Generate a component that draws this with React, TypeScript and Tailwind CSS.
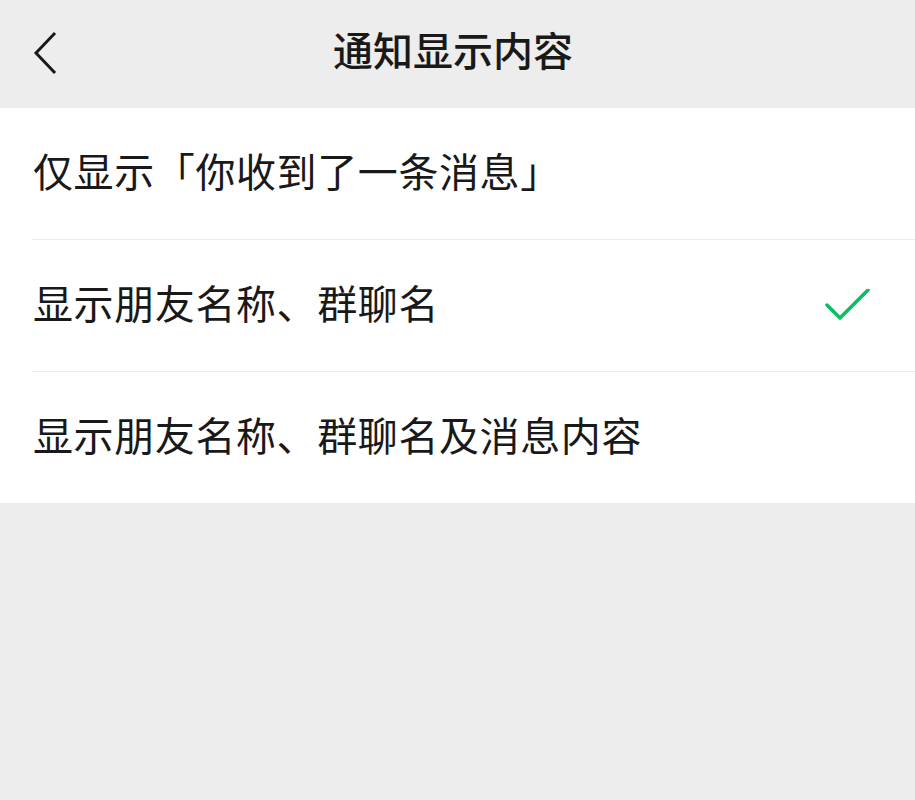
import React, { useState } from "react";

const options = [
  "仅显示「你收到了一条消息」",
  "显示朋友名称、群聊名",
  "显示朋友名称、群聊名及消息内容",
];

export default function App() {
  const [selected, setSelected] = useState(1);

  return (
    <div
      className="min-h-[800px] w-[915px] bg-[#ededed] text-[#191919]"
      style={{ fontFamily: '"Noto Sans CJK SC", "Noto Sans", sans-serif' }}
    >
      {/* top bar */}
      <div className="relative flex h-[108px] items-center justify-center pb-[10px]">
        <button type="button" className="absolute left-[30px] top-[30px] flex h-[46px] w-[30px] items-center justify-center">
          <svg width="30" height="46" viewBox="0 0 30 46" fill="none">
            <path d="M24 4 L6 23 L24 42" stroke="#191919" strokeWidth="3" strokeLinecap="square" />
          </svg>
        </button>
        <h1 className="-ml-[9px] text-[40px] font-medium leading-none">通知显示内容</h1>
      </div>

      {/* options */}
      <div className="bg-white">
        {options.map((label, i) => (
          <div key={label}>
            {i > 0 && <div className="ml-8 h-px bg-[#ececec]" />}
            <button
              type="button"
              onClick={() => setSelected(i)}
              className="flex h-[131px] w-full items-center justify-between pl-[33px] pr-[44px] text-left"
            >
              <span className="-mt-[8px] text-[40px] leading-none tracking-[0.6px]">{label}</span>
              {selected === i && (
                <svg width="46" height="34" viewBox="0 0 46 34" fill="none">
                  <path d="M2 16 L15 29 L43 1" stroke="#07c160" strokeWidth="3.5" strokeLinecap="round" strokeLinejoin="round" />
                </svg>
              )}
            </button>
          </div>
        ))}
      </div>
    </div>
  );
}
